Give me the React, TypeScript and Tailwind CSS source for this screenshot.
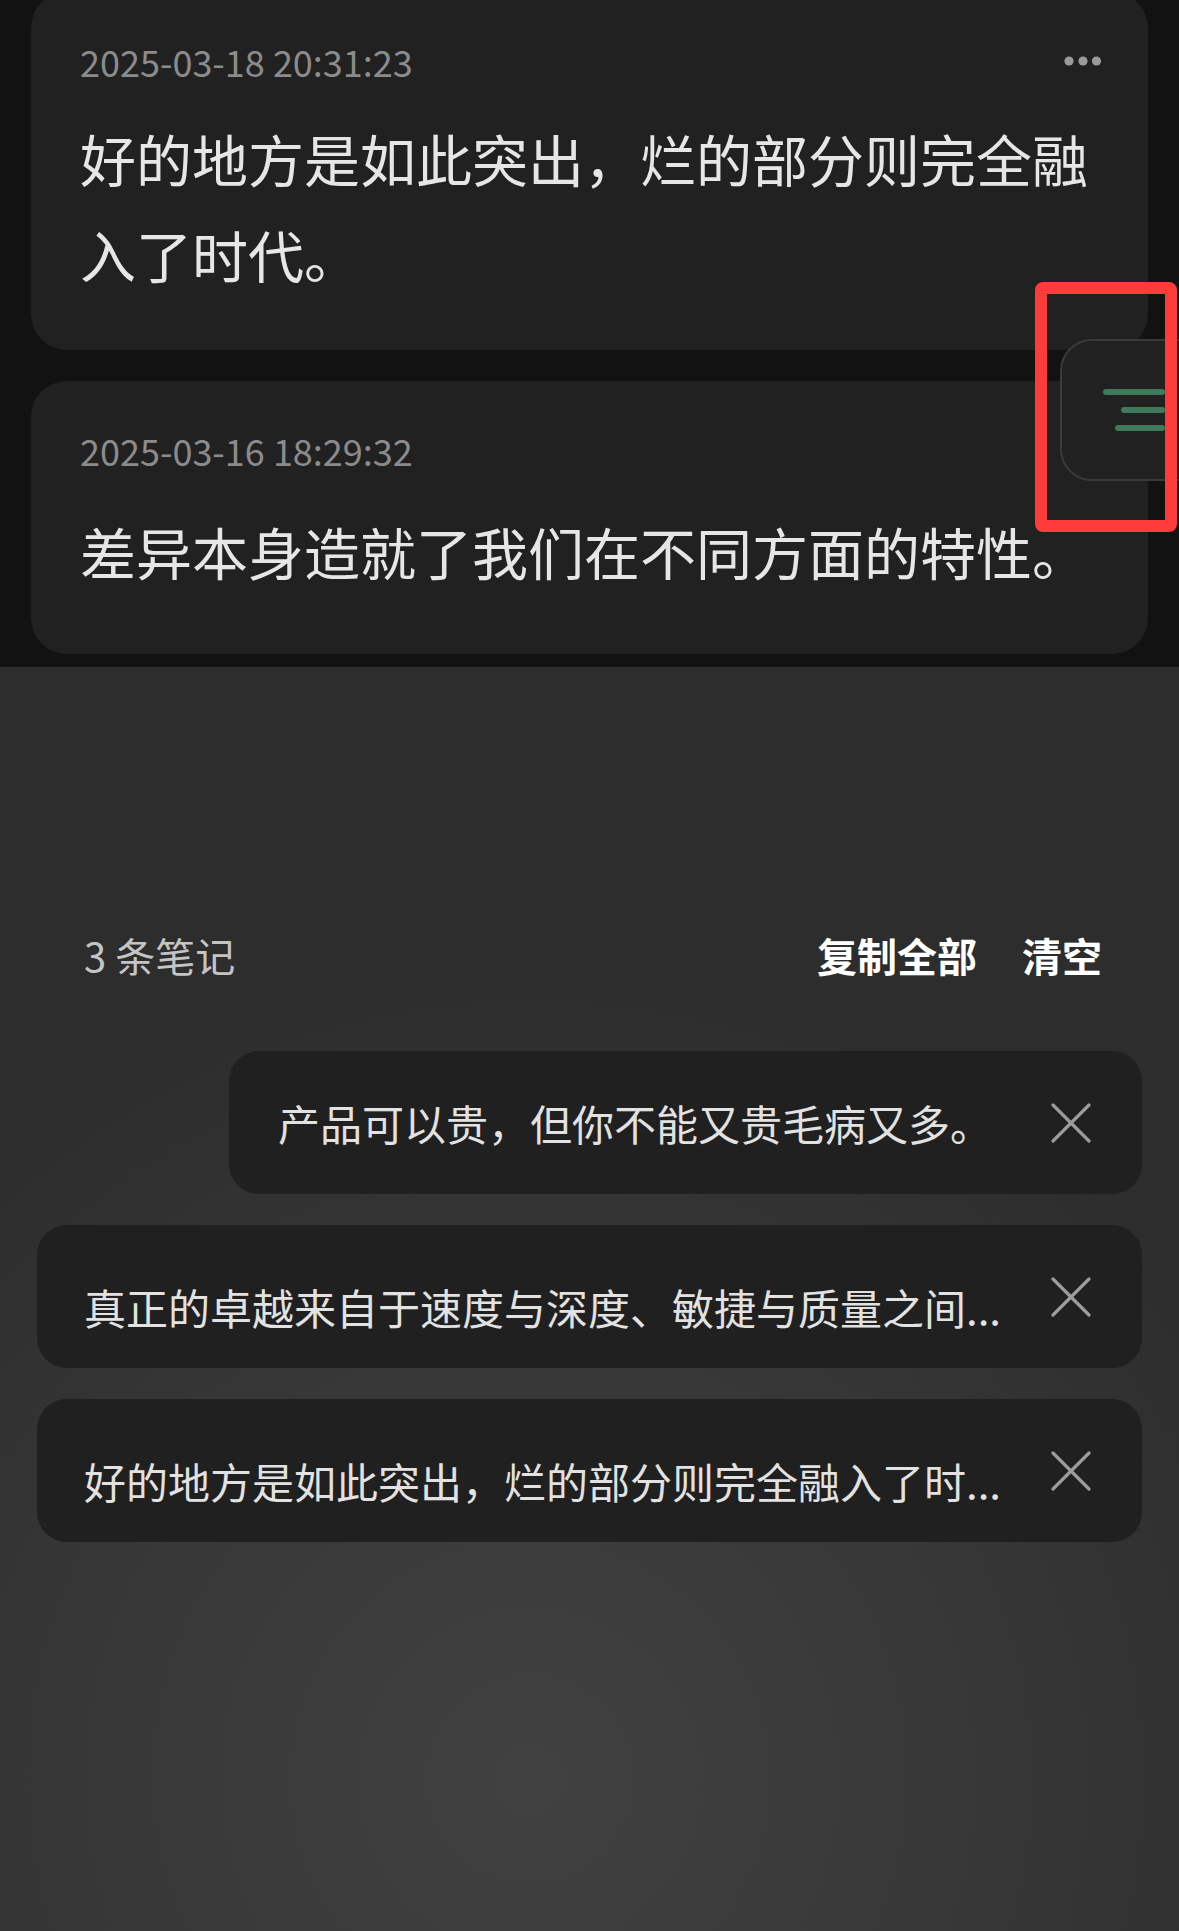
const notes = [
  {
    time: "2025-03-18 20:31:23",
    text: "好的地方是如此突出，烂的部分则完全融入了时代。",
  },
  {
    time: "2025-03-16 18:29:32",
    text: "差异本身造就了我们在不同方面的特性。",
  },
];

// preview text is already shortened the way the list shows it
const saved = [
  { text: "产品可以贵，但你不能又贵毛病又多。", full: false },
  { text: "真正的卓越来自于速度与深度、敏捷与质量之间...", full: true },
  { text: "好的地方是如此突出，烂的部分则完全融入了时...", full: true },
];

function MoreDots() {
  return (
    <svg width="38" height="12" viewBox="0 0 38 12" fill="#9a9a9a" aria-hidden>
      <circle cx="5" cy="6" r="4.6" />
      <circle cx="19" cy="6" r="4.6" />
      <circle cx="32.5" cy="6" r="4.6" />
    </svg>
  );
}

function CloseIcon() {
  return (
    <svg width="40" height="40" viewBox="0 0 40 40" aria-hidden>
      <g stroke="#9c9c9c" strokeWidth="3.2" strokeLinecap="round">
        <line x1="2" y1="2" x2="38" y2="38" />
        <line x1="38" y1="2" x2="2" y2="38" />
      </g>
    </svg>
  );
}

function NoteCard({ time, text, first }: { time: string; text: string; first?: boolean }) {
  return (
    <article
      className={`rounded-[36px] bg-[#212121] pl-[49px] pr-[46px] ${
        first ? "-mt-[8px] pt-[47px] pb-[48px]" : "pt-[47px] pb-[55px]"
      }`}
    >
      <div className="flex items-center justify-between">
        <span className="text-[36px] leading-[44px] text-[#8b8b8b]">{time}</span>
        {first && <MoreDots />}
      </div>
      <p className={`${first ? "mt-[27px]" : "mt-[31px]"} text-[56px] leading-[96px] text-[#e6e6e6]`}>
        {text}
      </p>
    </article>
  );
}

function SavedChip({ text, full }: { text: string; full: boolean }) {
  return (
    <div
      className={`flex h-[143px] items-center rounded-[30px] bg-[#202020] pr-[51px] ${
        full ? "w-full pl-[47px]" : "pl-[49px]"
      }`}
    >
      <span
        className={`min-w-0 flex-1 whitespace-nowrap text-[42px] leading-[52px] text-[#e2e2e2] ${
          full ? "pt-[20px]" : ""
        }`}
      >
        {text}
      </span>
      <button type="button" className="ml-[59px] shrink-0" aria-label="删除">
        <CloseIcon />
      </button>
    </div>
  );
}

export default function App() {
  return (
    <div className="relative h-[1931px] w-[1179px] overflow-hidden bg-[#121212] font-['Noto_Sans_CJK_SC','Noto_Sans',sans-serif]">
      {/* notes list */}
      <div className="flex h-[667px] flex-col gap-[31px] pl-[31px] pr-[31px]">
        {notes.map((n, i) => (
          <NoteCard key={i} time={n.time} text={n.text} first={i === 0} />
        ))}
      </div>

      {/* bottom sheet */}
      <section className="h-[1264px] bg-[radial-gradient(ellipse_70%_65%_at_45%_88%,#414141_0%,#373737_55%,#2d2d2d_100%)] px-[37px] pt-[262px]">
        <div className="flex items-center justify-between pl-[47px] pr-[40px] text-[40px] leading-[52px]">
          <span className="text-[#c4c4c4]">3 条笔记</span>
          <div className="flex gap-[45px] font-bold text-white">
            <button type="button">复制全部</button>
            <button type="button">清空</button>
          </div>
        </div>
        <div className="mt-[70px] flex flex-col items-end gap-[31px]">
          {saved.map((s, i) => (
            <SavedChip key={i} text={s.text} full={s.full} />
          ))}
        </div>
      </section>

      {/* floating outline toggle */}
      <button
        type="button"
        className="absolute left-[1060px] top-[339px] flex h-[142px] w-[150px] items-center rounded-[32px] border-2 border-[#3a3a3a] bg-[#212121] pl-[40px]"
        aria-label="目录"
      >
        <svg width="64" height="44" viewBox="0 0 64 44" aria-hidden>
          <g stroke="#3f7a5a" strokeWidth="6" strokeLinecap="round">
            <line x1="4" y1="4" x2="60" y2="4" />
            <line x1="22" y1="22" x2="60" y2="22" />
            <line x1="16" y1="40" x2="60" y2="40" />
          </g>
        </svg>
      </button>

      {/* highlight frame */}
      <div className="pointer-events-none absolute left-[1035px] top-[282px] h-[250px] w-[142px] rounded-[8px] border-[12px] border-[#fd3b3b]" />
    </div>
  );
}
